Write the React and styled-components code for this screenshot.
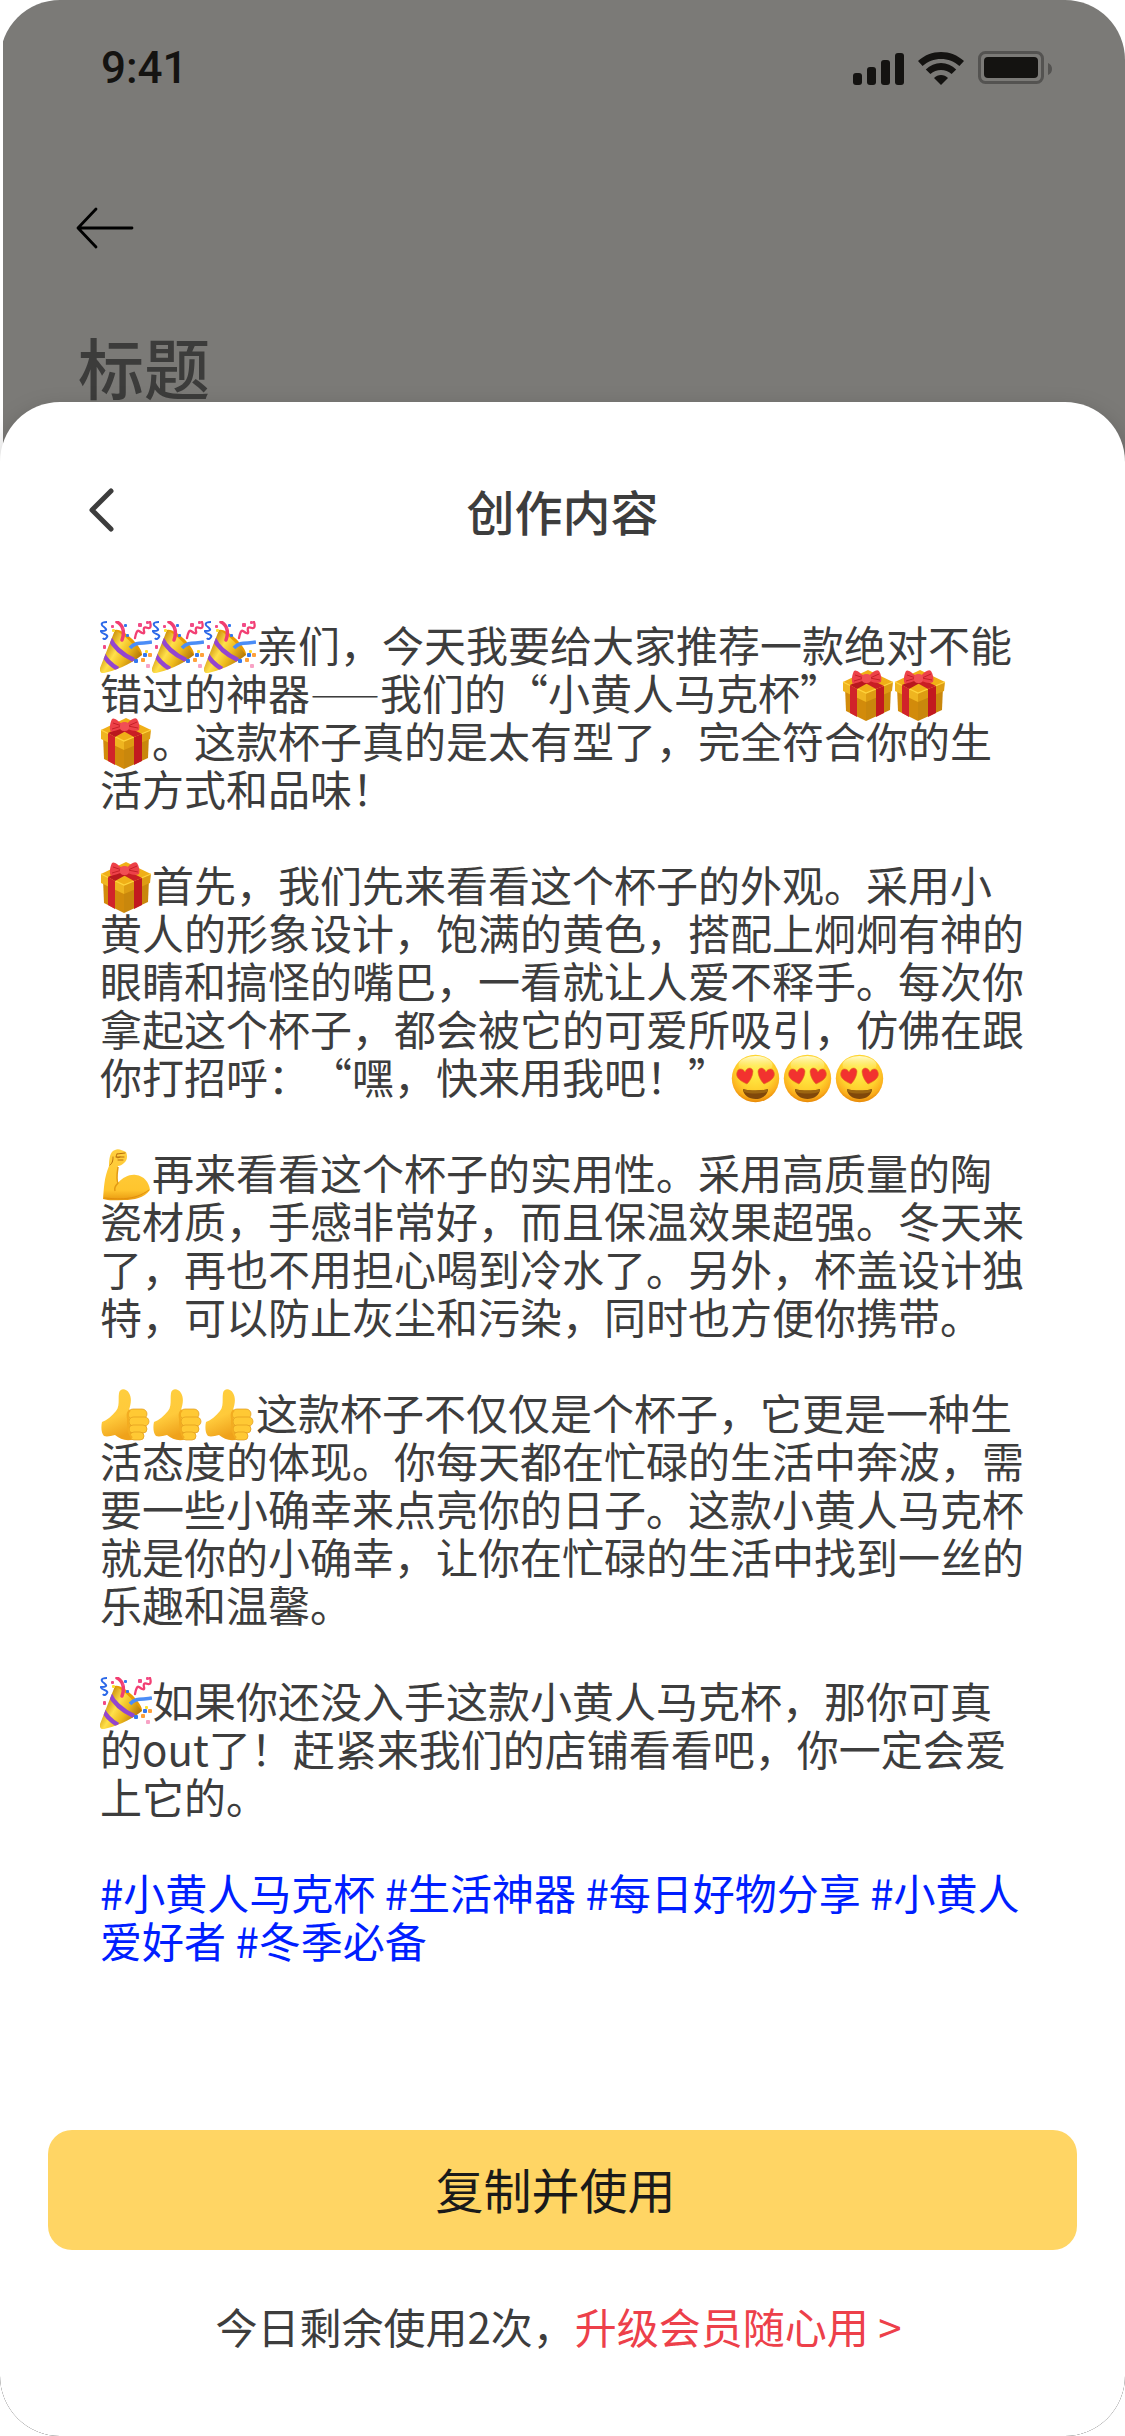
import React from 'react'
import styled, { createGlobalStyle } from 'styled-components'

const GlobalStyle = createGlobalStyle`
  * {
    box-sizing: border-box;
  }
  body {
    margin: 0;
    background: #fff;
    color: #3d3d3d;
    font-family: 'Noto Sans CJK SC', 'Noto Sans', sans-serif;
    font-size: 42px;
    line-height: 48px;
    text-spacing-trim: space-all;
  }
  button {
    border: 0;
    padding: 0;
    background: none;
    color: inherit;
    font: inherit;
    cursor: pointer;
  }
  svg {
    display: block;
  }
`

/* ---------- icons ---------- */

const SignalIcon = () => (
  <svg width='51' height='34' viewBox='0 0 51 34' fill='currentColor'>
    <rect x='0' y='22' width='9' height='12' rx='3' />
    <rect x='14' y='16' width='9' height='18' rx='3' />
    <rect x='28' y='9' width='9' height='25' rx='3' />
    <rect x='42' y='2' width='9' height='32' rx='3' />
  </svg>
)

const WifiIcon = () => (
  <svg width='46' height='34' viewBox='0 0 46 34' fill='currentColor'>
    <path d='M23 1C31.500 1 39.600 4.200 46 10L41.400 15C36.300 10.600 30 8 23 8S9.700 10.600 4.600 15L0 10C6.400 4.200 14.500 1 23 1Z' />
    <path d='M23 12C28.700 12 34 14.300 38.200 18.400L33.600 23C30.500 20.400 27 19 23 19S15.500 20.400 12.400 23L7.800 18.400C12 14.300 17.300 12 23 12Z' />
    <path d='M23 24C25.600 24 28.100 25 30 27L23 34L16 27C17.900 25 20.400 24 23 24Z' />
  </svg>
)

const BatteryIcon = () => (
  <svg width='74' height='34' viewBox='0 0 74 34' fill='none'>
    <rect x='1.500' y='1.500' width='63' height='30' rx='6' stroke='#545351' strokeWidth='3' />
    <rect x='6' y='6' width='54' height='21' rx='4' fill='currentColor' />
    <path d='M70 12V24C72.500 23 74 20.800 74 18S72.500 13 70 12Z' fill='#545351' />
  </svg>
)

const ArrowIcon = () => (
  <svg width='58' height='42' viewBox='0 0 58 42' fill='none' stroke='#000' strokeWidth='2.800' strokeLinecap='round' strokeLinejoin='round'>
    <path d='M56 21H2M20 2L2 21L20 40' />
  </svg>
)

const ChevronIcon = () => (
  <svg width='28' height='44' viewBox='0 0 28 44' fill='none' stroke='currentColor' strokeWidth='5' strokeLinecap='round' strokeLinejoin='round'>
    <path d='M24 3L5 22L24 41' />
  </svg>
)

/* ---------- emoji ---------- */

const Emoji = styled.svg.attrs({ viewBox: '0 0 52 52', role: 'img' })`
  display: inline-block;
  width: 52px;
  height: 52px;
  margin: -8px 0;
  vertical-align: -3px;
`

const Party = () => (
  <Emoji aria-label='彩带'>
    <defs>
      <linearGradient id='cone' x1='5' y1='24' x2='36' y2='42' gradientUnits='userSpaceOnUse'>
        <stop offset='0' stopColor='#c98b08' />
        <stop offset='.350' stopColor='#ffe04a' />
        <stop offset='.650' stopColor='#edb91c' />
        <stop offset='1' stopColor='#b77908' />
      </linearGradient>
      <clipPath id='coneClip'>
        <path d='M15 9C22 12 36 25 42 34C30 44 14 50 4 52C1 53-1 50 0 47Z' />
      </clipPath>
    </defs>
    <path d='M15 9C22 6 43 26 42 34C34 37 15 18 15 9Z' fill='#e99b00' />
    <path d='M15 9C22 12 36 25 42 34C30 44 14 50 4 52C1 53-1 50 0 47Z' fill='url(#cone)' />
    <g clipPath='url(#coneClip)' fill='none' stroke='#9445cf' strokeWidth='4.500'>
      <path d='M9 16C14 27 23 34 34 39' />
      <path d='M2 31C6 40 11 44 18 48' />
    </g>
    <path d='M17 1C23 4 25 11 22 19' fill='none' stroke='#f13d70' strokeWidth='3.500' strokeLinecap='round' />
    <path d='M30 27C36 20 43 23 52 21' fill='none' stroke='#4b8df7' strokeWidth='3.500' />
    <path d='M7 1C0 1 1 4 4 6C8 9 6 10 1 10C0 13 9 13 7 16C6 18 4 19 3 17' fill='none' stroke='#2b68e8' strokeWidth='2' />
    <path d='M35 17C36 12 37 9 39 10C42 12 45 14 44 10C43 6 45 6 48 7C51 8 51 4 50 1' fill='none' stroke='#f23f73' strokeWidth='2.300' strokeLinecap='round' />
    <g fill='#3277f0'>
      <rect x='24' y='3' width='3' height='3' rx='1' /><rect x='26' y='13' width='3' height='3' rx='1' />
      <rect x='34' y='38' width='4' height='4' rx='1' /><rect x='43' y='32' width='4' height='4' rx='1' />
    </g>
    <g fill='#f24b86'>
      <rect x='38' y='2' width='4' height='4' rx='1' /><rect x='46' y='0' width='3' height='3' rx='1' />
      <rect x='3' y='24' width='3' height='4' rx='1' /><rect x='22' y='6' width='2' height='3' rx='1' />
      <rect x='46' y='43' width='4' height='4' rx='1' fill='#f8a2c5' /><rect x='11' y='4' width='3' height='3' rx='1' />
    </g>
    <g fill='#ffa13a'>
      <rect x='41' y='37' width='4' height='4' rx='1' /><rect x='48' y='32' width='4' height='4' rx='1' />
      <rect x='45' y='29' width='3' height='3' rx='1' fill='#ffdf2d' /><rect x='12' y='8' width='3' height='3' rx='1' fill='#ffe02b' />
    </g>
  </Emoji>
)

const Gift = () => (
  <Emoji aria-label='礼物'>
    <path d='M3 18L24 28V52L4 42Z' fill='#d28b0b' />
    <path d='M24 28L49 18L48 41L24 52Z' fill='#c9870c' />
    <path d='M1 13L26 1L51 13L24 25Z' fill='#f0af17' />
    <path d='M1 13L24 24V33L1 22Z' fill='#efb520' />
    <path d='M24 24L51 13L50 22L24 33Z' fill='#dd9c12' />
    <path d='M1 13L24 24L51 13' fill='none' stroke='#ffd43d' strokeWidth='1.200' />
    <path d='M8 16L15 20V48L8 44Z' fill='#d1232a' />
    <path d='M34 20L42 17V44L34 48Z' fill='#c2191f' />
    <path d='M8 16L27 7L33 10L15 20Z' fill='#b9181e' />
    <path d='M24 8L42 17L34 20L18 11Z' fill='#c91e24' />
    <path d='M22 7C18 4 14 0 12 2C10 6 9 12 11 15C15 14 19 12 22 12Z' fill='#ed4148' />
    <path d='M27 7C31 2 35 0 37 2C39 5 40 10 39 13C35 15 31 13 27 12Z' fill='#ed4148' />
    <path d='M13 6L22 9L12 12M37 5L28 9L38 11' fill='none' stroke='#c62028' strokeWidth='1' />
    <rect x='20' y='5' width='9' height='9' rx='4' fill='#f14e54' />
  </Emoji>
)

const HeartEyes = () => (
  <Emoji aria-label='花痴'>
    <defs>
      <radialGradient id='face' cx='.500' cy='.350' r='.650'>
        <stop offset='0' stopColor='#fff04a' />
        <stop offset='.600' stopColor='#ffd12e' />
        <stop offset='.850' stopColor='#fbae1c' />
        <stop offset='1' stopColor='#e88906' />
      </radialGradient>
      <linearGradient id='shine' x1='0' y1='0' x2='0' y2='1'>
        <stop offset='0' stopColor='#fffbd0' />
        <stop offset='1' stopColor='#fff04a' stopOpacity='0' />
      </linearGradient>
    </defs>
    <circle cx='25.500' cy='25.500' r='23.700' fill='url(#face)' />
    <ellipse cx='25.500' cy='12' rx='17' ry='9' fill='url(#shine)' />
    <g fill='#f2322f' stroke='#df7b15' strokeWidth='.600'>
      <path d='M17 31C10 28 5 24 7 19C8 15 13 15 15 19C17 14 22 14 23 18C23 23 20 28 17 31Z' />
      <path d='M34 31C41 28 46 24 44 19C43 15 38 15 36 19C34 14 29 14 28 18C28 23 31 28 34 31Z' />
    </g>
    <path d='M13 36C20 38 31 38 38 36C38 42 32 46 25.500 46S13 42 13 36Z' fill='#80480a' />
    <path d='M13 36C20 38 31 38 38 36L37 39C31 41 20 41 14 39Z' fill='#9c6510' />
  </Emoji>
)

const Muscle = () => (
  <Emoji aria-label='加油'>
    <defs>
      <linearGradient id='arm' x1='0' y1='0' x2='0' y2='1'>
        <stop offset='0' stopColor='#ffd040' />
        <stop offset='.800' stopColor='#ffc52e' />
        <stop offset='1' stopColor='#e99a10' />
      </linearGradient>
    </defs>
    <path d='M3 50C4 39 4 29 9 17C9 10 10 2 15 1C18 -1 22 1 26 3C28 7 27 12 24 14C22 16 20 17 18 17C17 23 17 28 18 34C23 28 30 25 36 26C44 27 49 33 50 41C44 49 34 51 24 51C16 51 9 52 3 50Z' fill='url(#arm)' />
    <path d='M18 18C17 25 16 31 18 34C16 36 14 39 15 42' fill='none' stroke='#e39a13' strokeWidth='1.500' />
    <path d='M17 5L25 4M16 8L24 8M18 11L23 11M17 5C15 8 17 10 20 8M10 16C13 14 13 10 13 8' fill='none' stroke='#b96e0b' strokeWidth='1' strokeLinecap='round' />
    <path d='M4 49C18 50 34 52 49 41' fill='none' stroke='#e28e0d' strokeWidth='1' />
  </Emoji>
)

const Thumb = () => (
  <Emoji aria-label='赞'>
    <defs>
      <linearGradient id='hand' x1='0' y1='0' x2='.300' y2='1'>
        <stop offset='0' stopColor='#ffcf3e' />
        <stop offset='.600' stopColor='#ffca3b' />
        <stop offset='1' stopColor='#efa21b' />
      </linearGradient>
    </defs>
    <path d='M2 33C7 31 12 27 16 22C20 17 18 10 19 4C20 -1 26 -1 29 4C32 9 31 15 29 21L34 22C40 22 38 45 34 50C27 53 20 50 15 46C11 47 7 48 4 47C1 44 1 37 2 33Z' fill='url(#hand)' />
    <g fill='#ffc934' stroke='#e09a1c' strokeWidth='.700'>
      <rect x='28' y='20' width='19' height='10' rx='5' />
      <rect x='29' y='28' width='20' height='9' rx='4.500' />
      <rect x='29' y='36' width='18' height='8' rx='4' />
      <rect x='30' y='43' width='14' height='8' rx='4' />
    </g>
    <path d='M30 21C25 26 29 28 28 33C28 38 28 45 32 49' fill='none' stroke='#f3ac20' strokeWidth='2' />
  </Emoji>
)

/* ---------- layout ---------- */

const Screen = styled.div`
  display: flex;
  flex-direction: column;
  min-height: 100vh;
  border-radius: 60px;
  overflow: hidden;
  background: linear-gradient(#fff 50%, #777 50%);
`

const Backdrop = styled.header`
  margin-left: 3px;
  padding: 51px 73px 0 75px;
  height: 462px;
  background: #7b7a77;
`

const StatusBar = styled.div`
  display: flex;
  align-items: center;
  justify-content: space-between;
  height: 34px;
  padding-left: 23px;
  color: #141311;
`

const Clock = styled.time`
  font: 500 44px/34px Roboto, sans-serif;
`

const StatusIcons = styled.div`
  display: flex;
  gap: 14px;
`

const NavBack = styled.button`
  display: block;
  margin: 122px 0 76px -2px;
`

const PageTitle = styled.h1`
  margin: 0;
  color: #3c3c3b;
  font-size: 66px;
  font-weight: 500;
  line-height: 80px;
`

const Sheet = styled.main`
  display: flex;
  flex: 1;
  flex-direction: column;
  margin-top: -60px;
  border-radius: 60px;
  background: #fff;
  box-shadow: 0 10px 24px rgba(0, 0, 0, 0.25);
`

const SheetHeader = styled.div`
  display: grid;
  grid-template-columns: 1fr auto 1fr;
  align-items: center;
  padding: 78px 87px 0;
`

const SheetTitle = styled.h2`
  margin: 0;
  font-size: 48px;
  font-weight: 500;
  line-height: 60px;
`

const Article = styled.article`
  flex: 1;
  padding: 80px 100px 0;

  p {
    margin: 0 0 48px;
  }
`

const NoWrap = styled.span`
  white-space: nowrap;
`

const Dash = styled.span`
  font-size: 35px;
  line-height: 1;
`

const Tag = styled.a`
  color: #001eff;
  text-decoration: none;
`

const Footer = styled.footer`
  padding: 0 48px 86px;
  text-align: center;
`

const UseButton = styled.button`
  display: block;
  width: 100%;
  height: 120px;
  margin-bottom: 52px;
  padding: 0 14px 4px 0;
  border-radius: 24px;
  background: #ffd564;
  color: #1a1a1a;
  font-size: 48px;
`

const Quota = styled.p`
  margin: 0;
  padding-right: 8px;
`

const Upgrade = styled.a`
  color: #ed404a;
  text-decoration: none;
`

const tags = ['#小黄人马克杯', '#生活神器', '#每日好物分享', '#小黄人爱好者', '#冬季必备']

export default function App () {
  return (
    <>
      <GlobalStyle />
      <Screen lang='zh-CN'>
        <Backdrop>
          <StatusBar>
            <Clock>9:41</Clock>
            <StatusIcons>
              <SignalIcon />
              <WifiIcon />
              <BatteryIcon />
            </StatusIcons>
          </StatusBar>
          <NavBack aria-label='返回'><ArrowIcon /></NavBack>
          <PageTitle>标题</PageTitle>
        </Backdrop>
        <Sheet>
          <SheetHeader>
            <button aria-label='关闭'><ChevronIcon /></button>
            <SheetTitle>创作内容</SheetTitle>
          </SheetHeader>
          <Article>
            <p>
              <Party /><Party /><Party />亲们，今天我要给大家推荐一款绝对不能错过的神器<Dash>——</Dash>我们的“小黄人马克杯”<Gift /><Gift /><NoWrap><Gift />。</NoWrap>这款杯子真的是太有型了，完全符合你的生活方式和品味！
            </p>
            <p>
              <Gift />首先，我们先来看看这个杯子的外观。采用小黄人的形象设计，饱满的黄色，搭配上炯炯有神的眼睛和搞怪的嘴巴，一看就让人爱不释手。每次你拿起这个杯子，都会被它的可爱所吸引，仿佛在跟你打招呼：“嘿，快来用我吧！”<HeartEyes /><HeartEyes /><HeartEyes />
            </p>
            <p>
              <Muscle />再来看看这个杯子的实用性。采用高质量的陶瓷材质，手感非常好，而且保温效果超强。冬天来了，再也不用担心喝到冷水了。另外，杯盖设计独特，可以防止灰尘和污染，同时也方便你携带。
            </p>
            <p>
              <Thumb /><Thumb /><Thumb />这款杯子不仅仅是个杯子，它更是一种生活态度的体现。你每天都在忙碌的生活中奔波，需要一些小确幸来点亮你的日子。这款小黄人马克杯就是你的小确幸，让你在忙碌的生活中找到一丝的乐趣和温馨。
            </p>
            <p>
              <Party />如果你还没入手这款小黄人马克杯，那你可真的out了！赶紧来我们的店铺看看吧，你一定会爱上它的。
            </p>
            <p>
              {tags.map(tag => (
                <React.Fragment key={tag}><Tag href='#'>{tag}</Tag> </React.Fragment>
              ))}
            </p>
          </Article>
          <Footer>
            <UseButton>复制并使用</UseButton>
            <Quota>今日剩余使用2次，<Upgrade href='#'>升级会员随心用 &gt;</Upgrade></Quota>
          </Footer>
        </Sheet>
      </Screen>
    </>
  )
}
